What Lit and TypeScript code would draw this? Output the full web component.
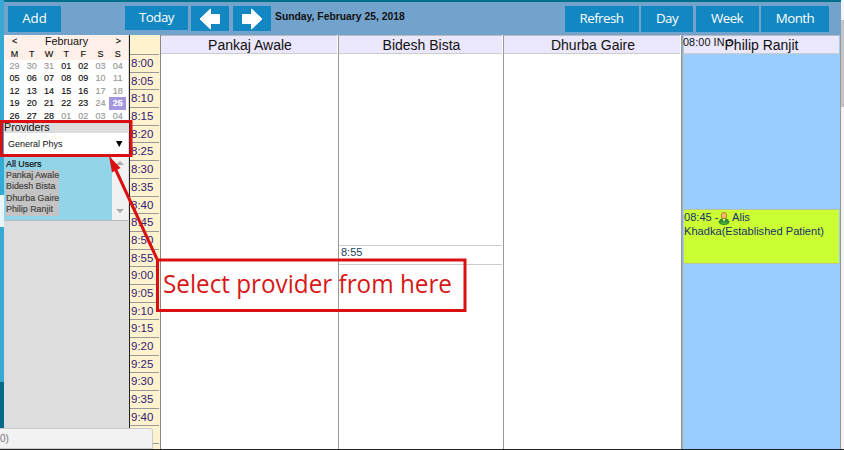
import { LitElement, html, css, svg } from "lit";
import { customElement } from "lit/decorators.js";

const WEEKS = ["29 30 31 01 02 03 04", "05 06 07 08 09 10 11", "12 13 14 15 16 17 18", "19 20 21 22 23 24 25", "26 27 28 01 02 03 04"];
const TIMES = ["8:00","8:05","8:10","8:15","8:20","8:25","8:30","8:35","8:40","8:45","8:50","8:55","9:00","9:05","9:10","9:15","9:20","9:25","9:30","9:35","9:40",""];

@customElement("app-root")
export class AppRoot extends LitElement {
  static styles = css`
    :host { display: block; position: relative; width: 844px; height: 450px; overflow: hidden; background: #fff; font-family: "Liberation Sans", Arial, sans-serif; color: #111; }
    * { box-sizing: border-box; }
    .page { display: grid; grid-template-columns: 4px 837px 3px; height: 449px; }
    .strip { background: linear-gradient(#35a8d4 0 195px, #e8f6fb 195px 227px, #35a8d4 227px 382px, #04688a 382px); }
    .main { display: grid; grid-template-rows: 35px 414px; min-width: 0; }
    .bar { display: flex; border-top: 2px solid #00708f; background: #72a3cd; padding: 4px 12px 0 4px; }
    .btn { background: #1287c1; color: #fff; height: 26px; flex: none; display: flex; align-items: center; justify-content: center; font: 500 13.3px/20px "Open Sans", "Noto Sans", sans-serif; letter-spacing: -.5px; padding-bottom: 2px; }
    .add { width: 53px; margin-right: 64px; letter-spacing: -.1px; }
    .today { width: 63px; height: 24px; margin-right: 3px; }
    .arrow { width: 38px; height: 25px; margin-right: 4px; padding: 0; }
    .date { font-weight: bold; font-size: 10.35px; line-height: 22px; white-space: nowrap; flex: 1; }
    .acts { display: flex; gap: 2.5px; }
    .refresh { width: 74px; } .day { width: 52px; } .week { width: 63px; } .month { width: 68px; }
    .body { display: grid; grid-template-columns: 125px 32px 178px 165px 178px 159px; height: 414px; }
    .side { background: #ddd; border-right: 1px solid #ddd; height: 414px; overflow: hidden; }
    .cal { background: #fff; width: 124px; height: 86px; font-size: 9px; overflow: hidden; -webkit-text-stroke: .15px currentColor; }
    .calhead { background: #fff0e9; height: 25px; }
    .month-row { display: flex; justify-content: space-between; padding: 0 7px 0 8px; line-height: 13px; height: 13px; }
    .mname { font-size: 10.8px; -webkit-text-stroke: 0; }
    .week-row { display: grid; grid-template-columns: repeat(7, 17.2px); padding-left: 2px; height: 12.4px; line-height: 12.8px; text-align: center; }
    .dim { color: #999; }
    .sel { background: #a496df; color: #fff; font-weight: bold; }
    .plabel { font-size: 10.8px; line-height: 13px; height: 12px; }
    .select { height: 21px; width: 124px; background: #fff; display: flex; align-items: center; justify-content: space-between; padding: 0 5px 0 4px; font-size: 9px; line-height: 20px; }
    .tri { width: 8px; height: 8px; }
    .list { height: 67px; width: 124px; background: #92d4e8; display: flex; justify-content: space-between; border-bottom: 1px solid #bbb; padding-left: 2px; font-size: 8.9px; -webkit-text-stroke: .2px currentColor; }
    .names { padding-top: 5px; }
    .all { line-height: 11px; height: 11px; }
    .name { display: block; width: max-content; min-width: 53px; line-height: 11.4px; height: 11.4px; background: #c4c4c4; color: #444; }
    .scroll { width: 16px; background: #f1f1f1; display: flex; flex-direction: column; justify-content: space-between; align-items: center; padding: 7px 0 7px; }
    .sc { width: 8px; height: 4px; display: block; }
    .times { border-left: 1px solid #222; border-right: 1px solid #888; background: #fff2cf; padding-right: 1px; height: 414px; overflow: hidden; }
    .t0 { height: 20px; border-bottom: 1px solid #999; }
    .t { height: 17.7px; line-height: 17px; font-size: 11.5px; color: #302273; border-bottom: 1px solid #999; padding-left: 1px; }
    .col { border-right: 1px solid #999; height: 414px; padding-right: 1px; }
    .colhead { height: 19px; border-top: 1px solid #bbb; border-bottom: 1px solid #ccc; background: #ebe7fc; text-align: center; font-size: 14px; line-height: 18px; white-space: nowrap; padding-left: 2px; }
    .slot { margin-top: 191px; height: 20px; border: 1px solid #ccc; border-width: 1px 0; font-size: 11px; line-height: 13px; padding-left: 2px; color: #20405c; }
    .phil { position: relative; padding-left: 1px; border-left: 1px solid #aaa; background: #99ccff; border-right: 1px solid #999; }
    .phil .colhead { padding-left: 0; }
    .in { position: absolute; left: 0; top: 1px; font-size: 10.8px; line-height: 13px; letter-spacing: .1px; }
    .appt { margin-top: 155px; height: 55px; background: #ccff33; border: 1px solid #bcc0a0; border-width: 1px 0; font-size: 11.1px; line-height: 14px; color: #16306b; white-space: nowrap; }
    .appt-line { height: 14px; }
    .user { width: 12px; height: 13px; vertical-align: -4px; margin-left: -1px; }
    .right { background: linear-gradient(#f5f5f5 0 20px, #c4c4c4 20px 107px, #f2f2f2 107px); }
    .bottom { height: 1px; background: #222; }
    .status { position: absolute; left: 0; top: 428px; width: 153px; height: 21px; background: #f2f2f2; border: 1px solid #ccc; border-left: 0; border-radius: 0 3px 0 0; font-size: 10px; line-height: 20px; color: #777; }
    .note { position: absolute; left: 0; top: 0; width: 844px; height: 450px; }
    .notetext { font: 25.5px "Open Sans", "Noto Sans", sans-serif; fill: #d81818; }
  `;
  arrow(flip: boolean) {
    return html`<svg width="24" height="23" viewBox="0 0 24 23"><path transform=${flip ? "translate(24 0) scale(-1 1)" : ""} fill="#fff" stroke="#fff" stroke-linejoin="round" d="M2 12 12.500 2v5.500h9v9h-9V22z"/></svg>`;
  }
  render() {
    return html`
      <div class="page">
        <div class="strip"></div>
        <div class="main">
          <div class="bar">
            <div class="btn add">Add</div>
            <div class="btn today">Today</div>
            <div class="btn arrow">${this.arrow(false)}</div>
            <div class="btn arrow">${this.arrow(true)}</div>
            <div class="date">Sunday, February 25, 2018</div>
            <div class="acts"><div class="btn refresh">Refresh</div><div class="btn day">Day</div><div class="btn week">Week</div><div class="btn month">Month</div></div>
          </div>
          <div class="body">
            <div class="side">
              <div class="cal">
                <div class="calhead">
                  <div class="month-row"><span>&lt;</span><span class="mname">February</span><span>&gt;</span></div>
                  <div class="week-row">${"MTWTFSS".split("").map((d) => html`<span>${d}</span>`)}</div>
                </div>
                ${WEEKS.map((w, r) => html`<div class="week-row">${w.split(" ").map((d, c) => html`<span class=${r === 3 && c === 6 ? "sel" : c > 4 || (r === 0 && c < 3) || (r === 4 && c > 2) ? "dim" : ""}>${d}</span>`)}</div>`)}
              </div>
              <div class="plabel">Providers</div>
              <div class="select"><span>General Phys</span><svg class="tri" viewBox="0 0 8 8"><path d="M1 1h6.500L4.250 7z"/></svg></div>
              <div class="list">
                <div class="names"><div class="all">All Users</div>${["Pankaj Awale", "Bidesh Bista", "Dhurba Gaire", "Philip Ranjit"].map((n) => html`<span class="name">${n}</span>`)}</div>
                <div class="scroll"><svg class="sc" viewBox="0 0 8 4"><path d="M0 4h8L4 0z" fill="#aaa"/></svg><svg class="sc" viewBox="0 0 8 4"><path d="M0 0h8L4 4z" fill="#aaa"/></svg></div>
              </div>
            </div>
            <div class="times"><div class="t0"></div>${TIMES.map((t) => html`<div class="t">${t}</div>`)}</div>
            <div class="col"><div class="colhead">Pankaj Awale</div></div>
            <div class="col"><div class="colhead">Bidesh Bista</div><div class="slot">8:55</div></div>
            <div class="col"><div class="colhead">Dhurba Gaire</div></div>
            <div class="col phil"><div class="colhead">Philip Ranjit</div><span class="in">08:00 IN⊙</span>
              <div class="appt"><div class="appt-line">08:45 -<svg class="user" viewBox="0 0 12 13"><path d="M.5 10q2-4.500 5.500-4.500T11.500 10q-1 3-5.500 3T.5 10" fill="#2c8b25"/><path d="M2.500 10.500q3.500 2 7 0" fill="none" stroke="#5fc04d"/><path d="m4 6 2 4 2-4z" fill="#d9eea8"/><ellipse cx="6" cy="3.600" rx="2.700" ry="3.100" fill="#f5c070" stroke="#b5782a"/></svg> Alis</div><div class="appt-line">Khadka(Established Patient)</div></div></div>
          </div>
        </div>
        <div class="right"></div>
      </div>
      <div class="bottom"></div>
      <div class="status">0)</div>
      <svg class="note" viewBox="0 0 844 450">
        <g fill="none" stroke="#d90f12" stroke-width="3"><rect x="1.500" y="121.500" width="129.500" height="34"/><rect x="157.500" y="260" width="307.500" height="50.500"/><path d="m114 166 43 93"/></g>
        <path d="m109 156 11.500 12-8.500 4.500z" fill="#d90f12"/>
        ${svg`<text class="notetext" x="163" y="293" textLength="289" lengthAdjust="spacingAndGlyphs">Select provider from here</text>`}
      </svg>`;
  }
}
